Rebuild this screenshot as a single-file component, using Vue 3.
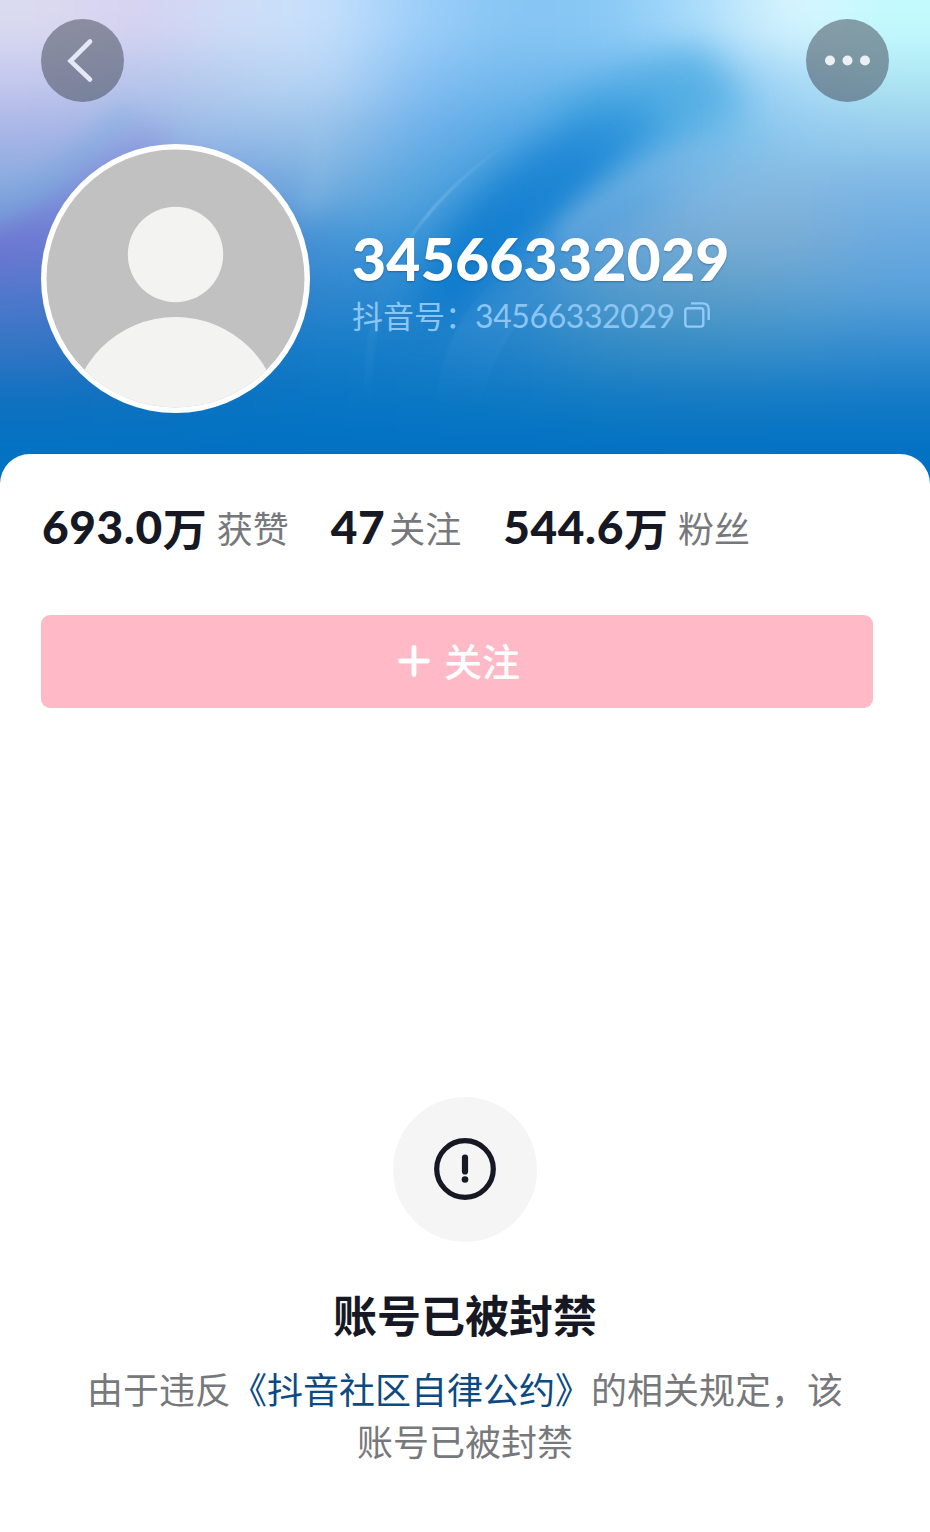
<script setup>
const account = '34566332029'

const stats = [
  { value: '693.0', unit: '万', label: '获赞' },
  { value: '47', unit: '', label: '关注' },
  { value: '544.6', unit: '万', label: '粉丝' },
]

const coverRows = [
  ['#dadaf0', '#d6d2f1', '#ceddf7', '#c6e0fc', '#9ccef9', '#86c5f3', '#87c8f5', '#aadcfb', '#daf5fe', '#c2fafe'],
  ['#c4c8ed', '#b8c5eb', '#b6cff0', '#b8d6f5', '#86bff2', '#72b9ed', '#76baee', '#78c0ef', '#acdaf7', '#aee6f3'],
  ['#a8b4e6', '#9ab4e4', '#9abee8', '#96c0e8', '#6eb0e9', '#54a8e4', '#4aa5e4', '#6cbae8', '#92caef', '#98cdec'],
  ['#86acdf', '#8290d6', '#6c9cdc', '#78b0df', '#54a4de', '#3f9cdb', '#4aa0dd', '#80b8e4', '#84b8e0', '#7cb6e5'],
  ['#7082d3', '#5878cc', '#4880cc', '#4494d6', '#3e97d8', '#2a8cd4', '#66a4dc', '#78acd4', '#7aacd4', '#6aaae0'],
  ['#5078cc', '#3c74c4', '#3078c4', '#3087ce', '#2888d0', '#308ad0', '#509acb', '#5a9cc8', '#5ca0d0', '#58a0da'],
  ['#3475c4', '#2472c1', '#1a76c2', '#167ec9', '#187dc7', '#2383ca', '#338ac5', '#368ec5', '#388ecb', '#348bcf'],
  ['#0e71c0', '#0c72c0', '#0873c1', '#0875c4', '#0a77c4', '#0c78c4', '#107ac3', '#147ac3', '#127ac5', '#127ac6'],
  ['#0272c2', '#0272c2', '#0271c3', '#0271c3', '#0271c3', '#0271c3', '#0271c3', '#0271c3', '#0271c3', '#0271c3'],
]

const cellW = 93
const cellH = 53.5
const cells = coverRows.flatMap((row, r) =>
  row.map((fill, c) => {
    const left = c === 0 ? -130 : c * cellW
    const right = c === row.length - 1 ? 1060 : (c + 1) * cellW + 1
    const top = r === 0 ? -100 : r * cellH
    const bottom = r === coverRows.length - 1 ? 600 : (r + 1) * cellH + 1
    return { x: left, y: top, w: right - left, h: bottom - top, fill }
  })
)
</script>

<template>
  <main class="profile">
    <header class="cover">
      <svg class="cover-art" viewBox="0 0 930 490" aria-hidden="true">
        <defs>
          <filter id="mesh" filterUnits="userSpaceOnUse" x="-130" y="-100" width="1190" height="700" color-interpolation-filters="sRGB">
            <feGaussianBlur stdDeviation="40 22" />
          </filter>
          <filter id="soft" filterUnits="userSpaceOnUse" x="-100" y="-100" width="1130" height="700" color-interpolation-filters="sRGB">
            <feGaussianBlur stdDeviation="17" />
          </filter>
          <filter id="fine" filterUnits="userSpaceOnUse" x="-100" y="-100" width="1130" height="700" color-interpolation-filters="sRGB">
            <feGaussianBlur stdDeviation="10" />
          </filter>
          <filter id="thread" filterUnits="userSpaceOnUse" x="-100" y="-100" width="1130" height="700" color-interpolation-filters="sRGB">
            <feGaussianBlur stdDeviation="1" />
          </filter>
          <linearGradient id="crescent" gradientUnits="userSpaceOnUse" x1="450" y1="280" x2="690" y2="90">
            <stop offset="0" stop-color="#0676cb" stop-opacity=".75" />
            <stop offset=".6" stop-color="#137ed2" stop-opacity=".65" />
            <stop offset="1" stop-color="#2f96de" stop-opacity=".35" />
          </linearGradient>
          <linearGradient id="threadFade" gradientUnits="userSpaceOnUse" x1="400" y1="250" x2="510" y2="140">
            <stop offset="0" stop-color="#8cc4ec" stop-opacity="0" />
            <stop offset=".3" stop-color="#8cc4ec" />
            <stop offset="1" stop-color="#8cc4ec" stop-opacity="0" />
          </linearGradient>
          <linearGradient id="foldFade" gradientUnits="userSpaceOnUse" x1="0" y1="270" x2="0" y2="410">
            <stop offset="0" stop-color="#4b9ddc" stop-opacity="0" />
            <stop offset=".4" stop-color="#4b9ddc" stop-opacity=".2" />
            <stop offset="1" stop-color="#4b9ddc" stop-opacity="0" />
          </linearGradient>
        </defs>
        <g filter="url(#mesh)">
          <rect v-for="(c, i) in cells" :key="i" :x="c.x" :y="c.y" :width="c.w" :height="c.h" :fill="c.fill" />
        </g>
        <path d="M-30 240 Q60 190 150 125 L170 150 Q90 190 30 270 L-30 280 Z" fill="#6a5fd0" opacity=".3" filter="url(#soft)" />
        <path d="M-20 222 Q55 185 130 110" fill="none" stroke="#74addd" stroke-width="18" opacity=".4" filter="url(#fine)" />
        <path d="M540 105 Q630 60 702 48 L746 108 Q690 132 600 160 Z" fill="#46a8e0" opacity=".65" filter="url(#soft)" />
        <path d="M430 262 Q480 165 590 112 Q650 90 672 122 Q600 165 555 215 Q505 255 470 310 Q430 330 415 310 Z" fill="url(#crescent)" filter="url(#soft)" />
        <path d="M490 240 Q545 165 655 128 Q600 160 548 216 Q520 240 490 270 Z" fill="#0f7ed2" opacity=".4" filter="url(#fine)" />
        <path d="M560 238 Q620 180 710 146" fill="none" stroke="#86bbe6" stroke-width="16" opacity=".4" filter="url(#fine)" />
        <path d="M305 110 Q336 140 308 215" fill="none" stroke="#a2cfee" stroke-width="18" opacity=".2" filter="url(#fine)" />
        <path d="M402 250 Q440 190 505 145" fill="none" stroke="url(#threadFade)" stroke-width="2.5" opacity=".6" filter="url(#thread)" />
        <path d="M365 405 Q358 330 395 262 L404 262 Q366 330 374 405 Z" fill="url(#foldFade)" filter="url(#thread)" />
        <path d="M434 405 Q445 320 500 275 L560 275 Q500 330 480 405 Z" fill="url(#foldFade)" filter="url(#thread)" />
      </svg>
      <nav class="toolbar">
        <button class="round-btn" aria-label="返回">
          <svg width="83" height="83" viewBox="0 0 83 83">
            <path d="M49 22.5 L29.5 42 L49 60.5" fill="none" stroke="#e6e9f5" stroke-width="4.6" stroke-linecap="round" stroke-linejoin="miter" />
          </svg>
        </button>
        <button class="round-btn" aria-label="更多">
          <svg width="83" height="83" viewBox="0 0 83 83" fill="#eaf0f4">
            <circle cx="24" cy="41.5" r="5" />
            <circle cx="41.5" cy="41.5" r="5" />
            <circle cx="59" cy="41.5" r="5" />
          </svg>
        </button>
      </nav>
      <section class="identity">
        <svg class="avatar" width="269" height="269" viewBox="0 0 269 269">
          <defs><clipPath id="face"><circle cx="134.5" cy="134.5" r="129" /></clipPath></defs>
          <circle cx="134.5" cy="134.5" r="134.5" fill="#fff" />
          <g clip-path="url(#face)">
            <rect width="269" height="269" fill="#c1c1c1" />
            <circle cx="134.5" cy="110.5" r="47.7" fill="#f3f3f2" />
            <circle cx="134.5" cy="278" r="105" fill="#f3f3f2" />
          </g>
        </svg>
        <div class="names">
          <h1>{{ account }}</h1>
          <p class="handle">
            <span class="handle-label">抖音号：</span><span class="handle-id">{{ account }}</span>
            <svg class="copy" width="26" height="26" viewBox="0 0 26 26" fill="none" stroke="#92cbf5" stroke-width="2.4">
              <rect x="1.3" y="6.2" width="18" height="18.4" rx="2.5" />
              <path d="M7 1.4 H18.5 Q24.7 1.4 24.7 7.6 V18" />
            </svg>
          </p>
        </div>
      </section>
    </header>

    <section class="sheet">
      <ul class="stats">
        <li v-for="s in stats" :key="s.label">
          <b>{{ s.value }}</b><i v-if="s.unit">{{ s.unit }}</i><span>{{ s.label }}</span>
        </li>
      </ul>
      <button class="follow">
        <svg width="32" height="32" viewBox="0 0 32 32">
          <path d="M16 2.5 V29.5 M2.5 16 H29.5" stroke="#fff" stroke-width="4.8" stroke-linecap="round" />
        </svg>
        <span>关注</span>
      </button>
      <section class="notice">
        <div class="notice-icon">
          <svg width="62" height="62" viewBox="0 0 62 62">
            <circle cx="31" cy="31" r="28.3" fill="none" stroke="#161823" stroke-width="5.2" />
            <path d="M31 19.5 V33.5" stroke="#161823" stroke-width="6.2" stroke-linecap="round" />
            <circle cx="31" cy="41.5" r="3.3" fill="#161823" />
          </svg>
        </div>
        <h2>账号已被封禁</h2>
        <p>由于违反<a>《抖音社区自律公约》</a>的相关规定，该<br />账号已被封禁</p>
      </section>
    </section>
  </main>
</template>

<style>
html,
body {
  background: #fff;
}
</style>

<style scoped>
.profile {
  width: 930px;
  height: 1532px;
  overflow: hidden;
  background: #fff;
  font-family: "Noto Sans CJK SC", "Noto Sans", sans-serif;
}
.cover {
  position: relative;
  height: 490px;
  box-sizing: border-box;
  padding: 19px 41px 0;
  overflow: hidden;
  background: #0271c3;
}
.cover-art {
  position: absolute;
  inset: 0;
  width: 930px;
  height: 490px;
}
.toolbar {
  position: relative;
  display: flex;
  justify-content: space-between;
}
.round-btn {
  width: 83px;
  height: 83px;
  padding: 0;
  border: 0;
  border-radius: 50%;
  background: rgba(62, 68, 80, 0.5);
}
.round-btn svg {
  display: block;
}
.identity {
  position: relative;
  display: flex;
  margin-top: 41.5px;
}
.avatar {
  display: block;
  flex: none;
}
.names {
  margin: 84.5px 0 0 42px;
}
h1 {
  margin: 0;
  color: #fff;
  font-family: Lato, sans-serif;
  font-size: 59px;
  line-height: 62px;
  font-weight: 900;
  letter-spacing: 0.1px;
  text-shadow: 0 1px 2px rgba(0, 30, 70, 0.35);
}
.handle {
  display: flex;
  align-items: center;
  height: 40px;
  margin: 5px 0 0;
  color: #8cc5f2;
  font-size: 31px;
  line-height: 40px;
  white-space: nowrap;
}
.handle-label {
  width: 123px;
}
.handle-id {
  width: 199px;
  padding-top: 2px;
  font-family: Lato, sans-serif;
  font-size: 32px;
  letter-spacing: -0.4px;
}
.copy {
  margin-left: 10px;
}
.sheet {
  position: relative;
  height: 1078px;
  margin-top: -36px;
  border-radius: 30px 30px 0 0;
  background: #fff;
}
.stats {
  display: flex;
  gap: 42px;
  height: 60px;
  margin: 0;
  padding: 43px 0 0 42px;
  list-style: none;
}
.stats li {
  display: flex;
  align-items: center;
  height: 60px;
  white-space: nowrap;
}
.stats b {
  color: #161823;
  font-family: Lato, sans-serif;
  font-size: 46px;
  line-height: 60px;
  font-weight: 900;
  letter-spacing: 0.6px;
}
.stats i {
  color: #161823;
  font-size: 44px;
  font-style: normal;
  font-weight: 700;
  line-height: 60px;
}
.stats span {
  margin-left: 10px;
  color: #77787c;
  font-size: 36px;
  line-height: 60px;
}
.stats b + span {
  margin-left: 4px;
}
.follow {
  display: flex;
  align-items: center;
  justify-content: center;
  gap: 14px;
  width: 832px;
  height: 93px;
  box-sizing: border-box;
  margin: 58px 0 0 41px;
  padding: 0 0 2px 4px;
  border: 0;
  border-radius: 9px;
  background: #ffb9c7;
  color: #fff;
  font: 500 38px/60px "Noto Sans CJK SC", sans-serif;
}
.follow span {
  margin-top: -2px;
}
.notice {
  display: flex;
  flex-direction: column;
  align-items: center;
  margin-top: 389px;
}
.notice-icon {
  display: flex;
  align-items: center;
  justify-content: center;
  width: 144px;
  height: 145px;
  box-sizing: border-box;
  padding-bottom: 2px;
  border-radius: 50%;
  background: #f5f5f5;
}
h2 {
  margin: 42px 0 0;
  color: #161823;
  font-size: 44px;
  line-height: 60px;
  font-weight: 700;
}
.notice p {
  margin: 18px 0 0;
  color: #77787b;
  font-size: 36px;
  line-height: 52px;
  text-align: center;
  white-space: nowrap;
}
.notice a {
  color: #0b4a82;
}
</style>
